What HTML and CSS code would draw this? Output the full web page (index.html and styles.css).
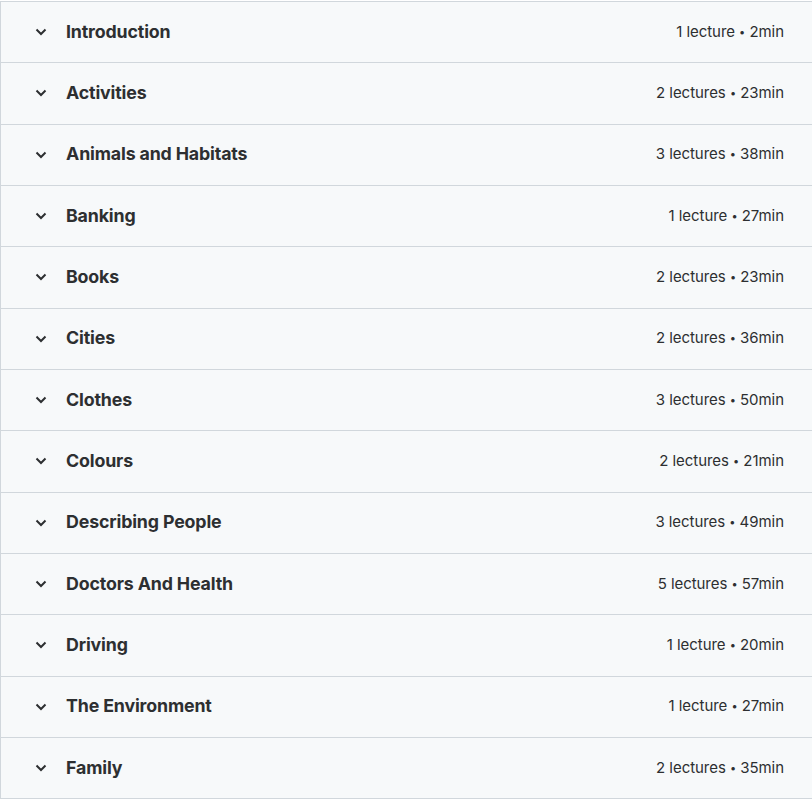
FILE: index.html
```html
<!DOCTYPE html>
<html>
<head>
<meta charset="utf-8">
<link rel="stylesheet" href="styles.css">
</head>
<body>
<div class="curriculum">
  <div class="section"><svg class="chev" viewBox="0 0 12 8"><path d="M1.5 1.5 L6 6 L10.5 1.5"/></svg><span class="title">Introduction</span><span class="meta">1 lecture <span class="dot">•</span> 2min</span></div>
  <div class="section"><svg class="chev" viewBox="0 0 12 8"><path d="M1.5 1.5 L6 6 L10.5 1.5"/></svg><span class="title">Activities</span><span class="meta">2 lectures <span class="dot">•</span> 23min</span></div>
  <div class="section"><svg class="chev" viewBox="0 0 12 8"><path d="M1.5 1.5 L6 6 L10.5 1.5"/></svg><span class="title">Animals and Habitats</span><span class="meta">3 lectures <span class="dot">•</span> 38min</span></div>
  <div class="section"><svg class="chev" viewBox="0 0 12 8"><path d="M1.5 1.5 L6 6 L10.5 1.5"/></svg><span class="title">Banking</span><span class="meta">1 lecture <span class="dot">•</span> 27min</span></div>
  <div class="section"><svg class="chev" viewBox="0 0 12 8"><path d="M1.5 1.5 L6 6 L10.5 1.5"/></svg><span class="title">Books</span><span class="meta">2 lectures <span class="dot">•</span> 23min</span></div>
  <div class="section"><svg class="chev" viewBox="0 0 12 8"><path d="M1.5 1.5 L6 6 L10.5 1.5"/></svg><span class="title">Cities</span><span class="meta">2 lectures <span class="dot">•</span> 36min</span></div>
  <div class="section"><svg class="chev" viewBox="0 0 12 8"><path d="M1.5 1.5 L6 6 L10.5 1.5"/></svg><span class="title">Clothes</span><span class="meta">3 lectures <span class="dot">•</span> 50min</span></div>
  <div class="section"><svg class="chev" viewBox="0 0 12 8"><path d="M1.5 1.5 L6 6 L10.5 1.5"/></svg><span class="title">Colours</span><span class="meta">2 lectures <span class="dot">•</span> 21min</span></div>
  <div class="section"><svg class="chev" viewBox="0 0 12 8"><path d="M1.5 1.5 L6 6 L10.5 1.5"/></svg><span class="title">Describing People</span><span class="meta">3 lectures <span class="dot">•</span> 49min</span></div>
  <div class="section"><svg class="chev" viewBox="0 0 12 8"><path d="M1.5 1.5 L6 6 L10.5 1.5"/></svg><span class="title">Doctors And Health</span><span class="meta">5 lectures <span class="dot">•</span> 57min</span></div>
  <div class="section"><svg class="chev" viewBox="0 0 12 8"><path d="M1.5 1.5 L6 6 L10.5 1.5"/></svg><span class="title">Driving</span><span class="meta">1 lecture <span class="dot">•</span> 20min</span></div>
  <div class="section"><svg class="chev" viewBox="0 0 12 8"><path d="M1.5 1.5 L6 6 L10.5 1.5"/></svg><span class="title">The Environment</span><span class="meta">1 lecture <span class="dot">•</span> 27min</span></div>
  <div class="section"><svg class="chev" viewBox="0 0 12 8"><path d="M1.5 1.5 L6 6 L10.5 1.5"/></svg><span class="title">Family</span><span class="meta">2 lectures <span class="dot">•</span> 35min</span></div>
</div>
</body>
</html>
```
FILE: styles.css
```css
html, body {
  margin: 0;
  padding: 0;
  background: #ffffff;
}
body {
  font-family: Inter, "Noto Sans", sans-serif;
  color: #2d2f31;
}
.curriculum {
  margin-top: 1px;
  border-left: 1px solid #d1d7dc;
}
.section {
  display: flex;
  align-items: center;
  height: 58.33px;
  box-sizing: content-box;
  background: #f7f9fa;
  border-top: 1px solid #d1d7dc;
  padding: 0 28px 2px 34px;
}
.section:last-child {
  border-bottom: 1px solid #d1d7dc;
}
.chev {
  width: 12px;
  height: 8px;
  fill: none;
  stroke: #2d2f31;
  stroke-width: 2;
  flex: none;
  margin-top: 2px;
}
.title {
  margin-left: 19px;
  font-weight: 700;
  font-size: 17.8px;
  letter-spacing: -0.15px;
  flex: 1;
}
.meta {
  font-size: 15px;
  letter-spacing: -0.05px;
}
.dot {
  font-size: 11px;
  position: relative;
  top: -1px;
}
```
